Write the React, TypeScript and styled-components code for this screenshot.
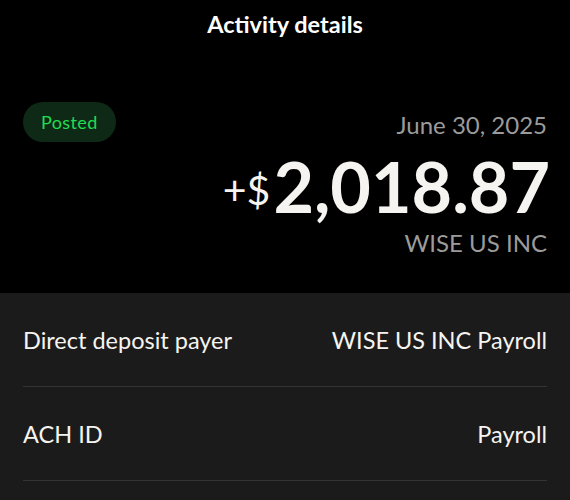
import styled, { createGlobalStyle } from "styled-components";

const GlobalStyle = createGlobalStyle`
  html, body {
    margin: 0;
    padding: 0;
    background: #000;
  }
  body {
    font-family: Lato, "Noto Sans", sans-serif;
    color: #f5f4f0;
  }
`;

interface Detail {
  label: string;
  value: string;
}

const details: Detail[] = [
  { label: "Direct deposit payer", value: "WISE US INC Payroll" },
  { label: "ACH ID", value: "Payroll" },
];

const App = () => {
  return (
    <StyledPage>
      <GlobalStyle />
      <StyledHeader>Activity details</StyledHeader>
      <StyledSummary>
        <StyledPill>Posted</StyledPill>
        <StyledAmountBlock>
          <StyledDate>June 30, 2025</StyledDate>
          <StyledAmount>
            <StyledSign>+$</StyledSign>
            <StyledFigure>2,018.87</StyledFigure>
          </StyledAmount>
          <StyledPayer>WISE US INC</StyledPayer>
        </StyledAmountBlock>
      </StyledSummary>
      <StyledPanel>
        {details.map((d) => (
          <StyledRow key={d.label}>
            <StyledLabel>{d.label}</StyledLabel>
            <StyledValue>{d.value}</StyledValue>
          </StyledRow>
        ))}
      </StyledPanel>
    </StyledPage>
  );
};

export default App;

const StyledPage = styled.div`
  width: 570px;
  height: 500px;
  overflow: hidden;
  display: flex;
  flex-direction: column;
  background: #000;
`;

const StyledHeader = styled.h1`
  margin: 0;
  height: 48px;
  display: flex;
  align-items: center;
  justify-content: center;
  font-size: 23.5px;
  font-weight: 700;
  color: #fff;
`;

const StyledSummary = styled.div`
  height: 245px;
  display: flex;
  justify-content: space-between;
  align-items: flex-start;
  padding: 54px 23px 0 23px;
  box-sizing: border-box;
`;

const StyledPill = styled.div`
  height: 40px;
  padding: 0 18px;
  display: flex;
  align-items: center;
  border-radius: 20px;
  background: #0e2a16;
  color: #22dc52;
  font-size: 18px;
  letter-spacing: 0.4px;
`;

const StyledAmountBlock = styled.div`
  display: flex;
  flex-direction: column;
  align-items: flex-end;
  margin-top: 9px;
`;

const StyledDate = styled.div`
  font-size: 24px;
  line-height: 28px;
  color: #9b9b9b;
`;

const StyledAmount = styled.div`
  display: flex;
  align-items: baseline;
  margin-top: 12px;
  line-height: 70px;
  margin-right: -3px;
`;

const StyledSign = styled.span`
  font-size: 41px;
  font-weight: 400;
  color: #f5f4f0;
  margin-right: 3px;
  position: relative;
  top: -8px;
`;

const StyledFigure = styled.span`
  font-size: 70px;
  font-weight: 700;
  color: #f5f4f0;
`;

const StyledPayer = styled.div`
  font-size: 24px;
  line-height: 28px;
  margin-top: -4px;
  color: #9b9b9b;
`;

const StyledPanel = styled.div`
  flex: 1;
  background: #1c1b1c;
  padding: 0 23px;
`;

const StyledRow = styled.div`
  height: 93px;
  display: flex;
  justify-content: space-between;
  align-items: center;
  border-bottom: 1px solid #353435;
  font-size: 23.5px;
  color: #f5f4f0;
`;

const StyledLabel = styled.span``;

const StyledValue = styled.span``;
